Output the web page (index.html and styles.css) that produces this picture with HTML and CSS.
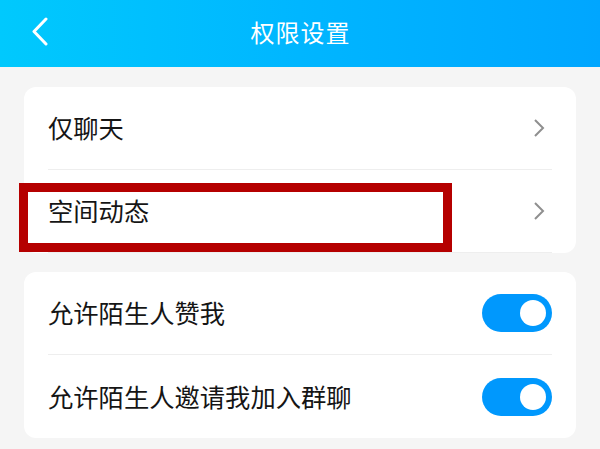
FILE: index.html
```html
<!DOCTYPE html>
<html lang="zh">
<head>
<meta charset="utf-8">
<link rel="stylesheet" href="styles.css">
</head>
<body>
<div class="page">
  <header class="topbar">
    <svg class="back" width="20" height="30" viewBox="0 0 20 30"><path d="M16 3 L4 15.5 L16 28" fill="none" stroke="#fff" stroke-width="3" stroke-linecap="round" stroke-linejoin="round"/></svg>
    <div class="title">权限设置</div>
  </header>
  <main class="content">
    <section class="card">
      <div class="row">
        <span class="label">仅聊天</span>
        <svg class="chev" width="14" height="20" viewBox="0 0 14 20"><path d="M3 2 L11 10 L3 18" fill="none" stroke="#8f8f8f" stroke-width="2"/></svg>
      </div>
      <div class="row">
        <span class="label">空间动态</span>
        <svg class="chev" width="14" height="20" viewBox="0 0 14 20"><path d="M3 2 L11 10 L3 18" fill="none" stroke="#8f8f8f" stroke-width="2"/></svg>
      </div>
      <div class="highlight"></div>
    </section>
    <section class="card">
      <div class="row">
        <span class="label">允许陌生人赞我</span>
        <span class="toggle"><span class="knob"></span></span>
      </div>
      <div class="row">
        <span class="label">允许陌生人邀请我加入群聊</span>
        <span class="toggle"><span class="knob"></span></span>
      </div>
    </section>
  </main>
</div>
</body>
</html>
```

FILE: styles.css
```css
* { box-sizing: border-box; }
html, body { margin: 0; padding: 0; }
body {
  width: 600px;
  height: 449px;
  overflow: hidden;
  background: #f5f5f5;
  font-family: "Noto Sans CJK SC", "Noto Sans", sans-serif;
}
.topbar {
  position: relative;
  height: 67px;
  background: linear-gradient(90deg, #00c9fd 0%, #00b6ff 50%, #00a6ff 100%);
  display: flex;
  align-items: center;
  justify-content: center;
  padding-bottom: 3px;
}
.back {
  position: absolute;
  left: 30px;
  top: 16px;
}
.title {
  color: #fff;
  font-size: 24px;
  letter-spacing: 1px;
  line-height: 1;
  padding-left: 1px;
}
.content {
  padding: 20px 24px 0 24px;
  display: flex;
  flex-direction: column;
  gap: 19px;
}
.card {
  position: relative;
  background: #fff;
  border-radius: 12px;
  padding: 0 24px;
}
.row {
  height: 83px;
  display: flex;
  align-items: center;
  justify-content: space-between;
  border-bottom: 1px solid #eeeeee;
}
.row:last-of-type { border-bottom: none; }
.label {
  font-size: 25.3px;
  color: #151515;
  line-height: 1;
}
.chev { margin-right: 6px; }
.toggle {
  width: 70px;
  height: 38px;
  border-radius: 19px;
  background: #0098fd;
  display: flex;
  align-items: center;
  justify-content: flex-end;
  padding-right: 6px;
}
.knob {
  width: 26px;
  height: 26px;
  border-radius: 50%;
  background: #fff;
}
.highlight {
  position: absolute;
  left: -5px;
  top: 96px;
  width: 433px;
  height: 69px;
  border: 9px solid #b50000;
}
```
